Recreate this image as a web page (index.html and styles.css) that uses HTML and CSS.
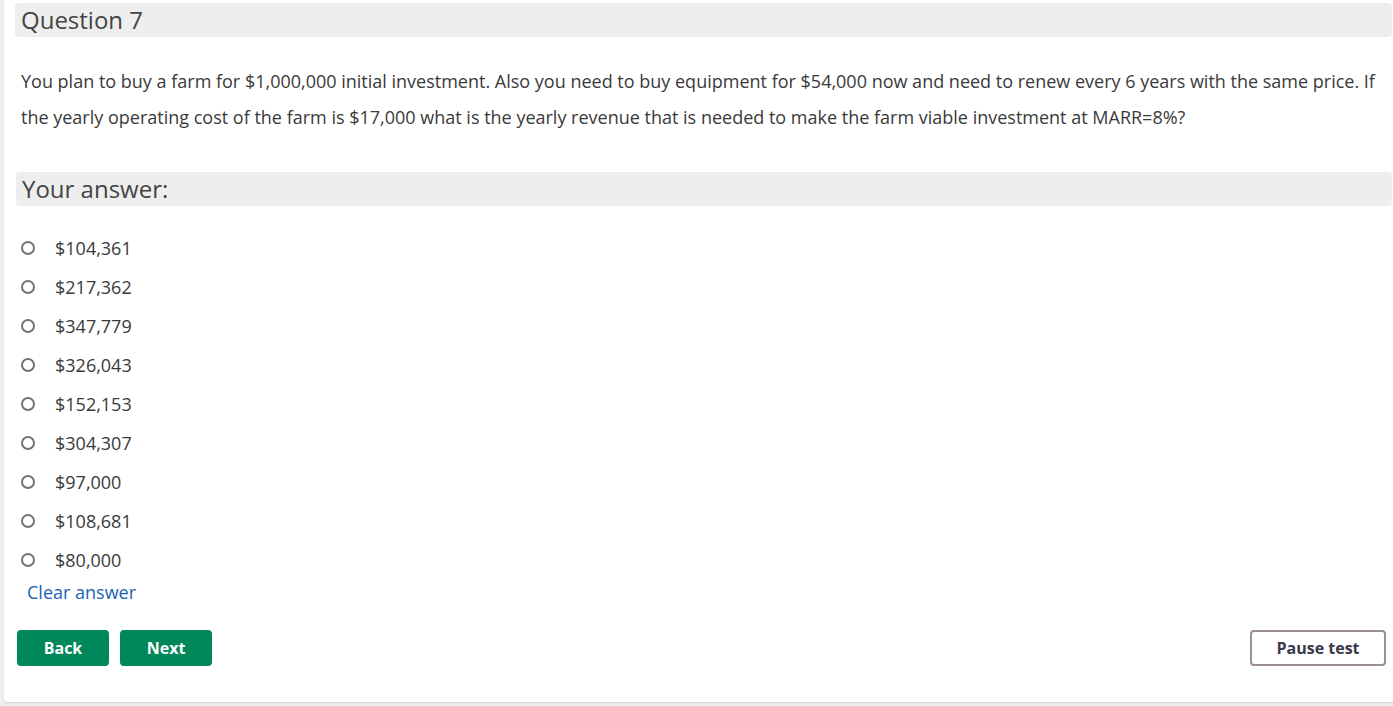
FILE: index.html
```html
<!DOCTYPE html>
<html lang="en">
<head>
<meta charset="utf-8">
<title>Question 7</title>
<link rel="stylesheet" href="styles.css">
</head>
<body>
<div class="card">
  <h2 class="bar">Question 7</h2>
  <p class="question">You plan to buy a farm for $1,000,000 initial investment. Also you need to buy equipment for $54,000 now and need to renew every 6 years with the same price. If the yearly operating cost of the farm is $17,000 what is the yearly revenue that is needed to make the farm viable investment at MARR=8%?</p>
  <h2 class="bar bar-answer">Your answer:</h2>
  <ul class="options">
    <li><label class="option"><span class="radio"></span><span>$104,361</span></label></li>
    <li><label class="option"><span class="radio"></span><span>$217,362</span></label></li>
    <li><label class="option"><span class="radio"></span><span>$347,779</span></label></li>
    <li><label class="option"><span class="radio"></span><span>$326,043</span></label></li>
    <li><label class="option"><span class="radio"></span><span>$152,153</span></label></li>
    <li><label class="option"><span class="radio"></span><span>$304,307</span></label></li>
    <li><label class="option"><span class="radio"></span><span>$97,000</span></label></li>
    <li><label class="option"><span class="radio"></span><span>$108,681</span></label></li>
    <li><label class="option"><span class="radio"></span><span>$80,000</span></label></li>
  </ul>
  <a class="clear" href="#">Clear answer</a>
  <div class="actions">
    <div class="nav">
      <button class="btn btn-green">Back</button>
      <button class="btn btn-green">Next</button>
    </div>
    <button class="btn btn-outline">Pause test</button>
  </div>
</div>
</body>
</html>
```
FILE: styles.css
```css
html, body {
  margin: 0;
  padding: 0;
}
body {
  background: #efefef;
  font-family: "Open Sans", "Liberation Sans", sans-serif;
  color: #3a3a3a;
  height: 706px;
  overflow: hidden;
}
.card {
  background: #ffffff;
  margin-left: 4px;
  padding: 3px 1px 36px 11px;
  box-shadow: 0 1px 2px rgba(0,0,0,0.12);
  border-radius: 0 0 0 3px;
}
.bar {
  margin: 0;
  background: #eeeeee;
  border-radius: 4px;
  font-size: 24px;
  font-weight: 400;
  line-height: 34px;
  height: 34px;
  padding-left: 6px;
  color: #444444;
}
.question {
  margin: 26px 0 37px 6px;
  font-size: 18px;
  line-height: 36px;
  color: #3a3a3a;
}
.bar-answer {
  margin-left: 1px;
}
.options {
  list-style: none;
  margin: 22px 0 0 0;
  padding: 0;
}
.option {
  display: flex;
  align-items: center;
  height: 39px;
  font-size: 18px;
  color: #3a3a3a;
}
.radio {
  width: 10px;
  height: 10px;
  border: 2px solid #747474;
  border-radius: 50%;
  margin-left: 6px;
  margin-right: 20px;
  box-sizing: content-box;
  flex: none;
}
.clear {
  display: inline-block;
  margin-left: 12px;
  margin-top: 1px;
  font-size: 18px;
  line-height: 24px;
  color: #1a63b3;
  text-decoration: none;
}
.actions {
  display: flex;
  justify-content: space-between;
  align-items: center;
  margin-top: 26px;
  padding-left: 2px;
  padding-right: 6px;
}
.nav {
  display: flex;
  gap: 11px;
}
.btn {
  font-family: "Open Sans", "Liberation Sans", sans-serif;
  font-size: 16px;
  font-weight: 700;
  height: 36px;
  border-radius: 4px;
  cursor: pointer;
}
.btn-green {
  width: 92px;
  background: #00875a;
  color: #ffffff;
  border: none;
}
.btn-outline {
  width: 136px;
  background: #ffffff;
  color: #3a3a4a;
  border: 2px solid #9c8f99;
}
```
